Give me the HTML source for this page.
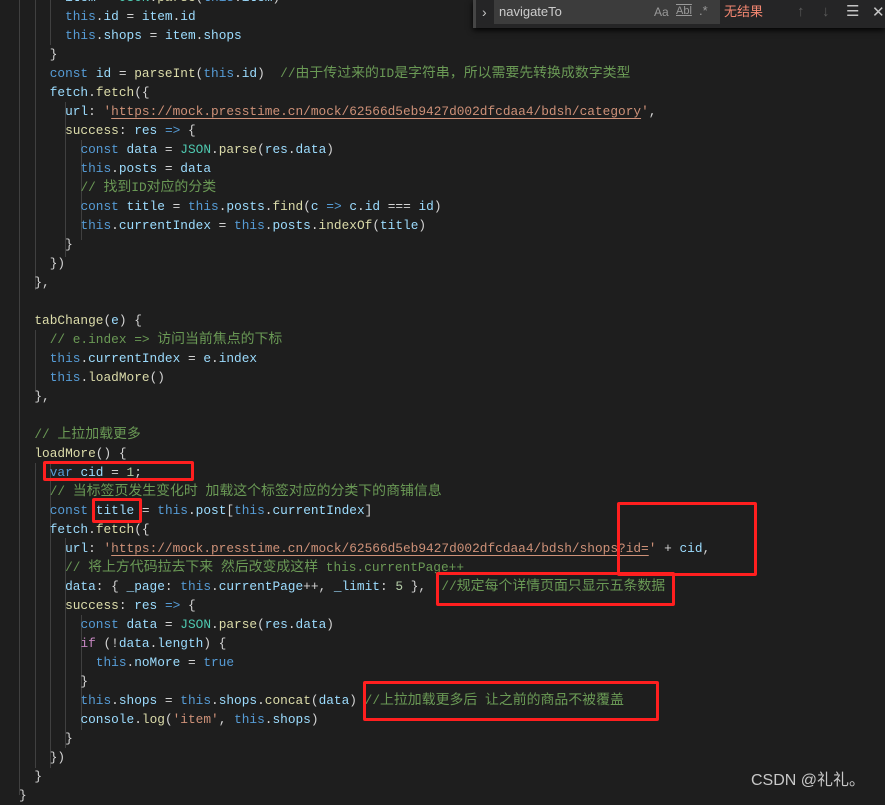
<!DOCTYPE html>
<html><head><meta charset="utf-8"><style>
body{margin:0;width:885px;height:795px;background:#1e1e1e;overflow:hidden;position:relative;font-family:"Liberation Mono","Noto Sans CJK SC",monospace;}
#code{position:absolute;left:19px;top:-12.5px;font-size:12.8px;line-height:19px;white-space:pre;color:#d4d4d4;}
.k{color:#569cd6}.v{color:#9cdcfe}.f{color:#dcdcaa}.s{color:#ce9178}.c{color:#6a9955}.t{color:#4ec9b0}.p{color:#c586c0}.n{color:#b5cea8}
.z{font-size:13.9px;line-height:0;font-family:"Noto Sans CJK SC",sans-serif}
.u{text-decoration:underline;text-decoration-color:#ce9178;text-underline-offset:3px}
.g{position:absolute;width:1px;background:#404040}
.box{position:absolute;border:3px solid #ff1f1f;border-radius:2px;box-sizing:border-box}
</style></head><body>
<div class="g" style="left:19px;top:0;height:795px"></div>
<div class="g" style="left:35px;top:0;height:290px"></div>
<div class="g" style="left:35px;top:330px;height:60px"></div>
<div class="g" style="left:35px;top:463px;height:305px"></div>
<div class="g" style="left:50px;top:0;height:45px"></div>
<div class="g" style="left:50px;top:463px;height:305px"></div>
<div class="g" style="left:65px;top:102px;height:155px"></div>
<div class="g" style="left:65px;top:538px;height:210px"></div>
<div class="g" style="left:81px;top:140px;height:100px"></div>
<div class="g" style="left:81px;top:615px;height:115px"></div>
<div class="g" style="left:81px;top:652px;height:20px"></div>
<div id="code">      <span class="v">item</span> = <span class="t">JSON</span>.<span class="f">parse</span>(<span class="k">this</span>.<span class="v">item</span>)
      <span class="k">this</span>.<span class="v">id</span> = <span class="v">item</span>.<span class="v">id</span>
      <span class="k">this</span>.<span class="v">shops</span> = <span class="v">item</span>.<span class="v">shops</span>
    }
    <span class="k">const</span> <span class="v">id</span> = <span class="f">parseInt</span>(<span class="k">this</span>.<span class="v">id</span>)  <span class="c">//<span class="z">由于传过来的</span>ID<span class="z">是字符串，所以需要先转换成数字类型</span></span>
    <span class="v">fetch</span>.<span class="f">fetch</span>({
      <span class="v">url</span>: <span class="s">'<span class="u">https://mock.presstime.cn/mock/62566d5eb9427d002dfcdaa4/bdsh/category</span>'</span>,
      <span class="f">success</span>: <span class="v">res</span> <span class="k">=&gt;</span> {
        <span class="k">const</span> <span class="v">data</span> = <span class="t">JSON</span>.<span class="f">parse</span>(<span class="v">res</span>.<span class="v">data</span>)
        <span class="k">this</span>.<span class="v">posts</span> = <span class="v">data</span>
        <span class="c">// <span class="z">找到</span>ID<span class="z">对应的分类</span></span>
        <span class="k">const</span> <span class="v">title</span> = <span class="k">this</span>.<span class="v">posts</span>.<span class="f">find</span>(<span class="v">c</span> <span class="k">=&gt;</span> <span class="v">c</span>.<span class="v">id</span> === <span class="v">id</span>)
        <span class="k">this</span>.<span class="v">currentIndex</span> = <span class="k">this</span>.<span class="v">posts</span>.<span class="f">indexOf</span>(<span class="v">title</span>)
      }
    })
  },

  <span class="f">tabChange</span>(<span class="v">e</span>) {
    <span class="c">// e.index =&gt; <span class="z">访问当前焦点的下标</span></span>
    <span class="k">this</span>.<span class="v">currentIndex</span> = <span class="v">e</span>.<span class="v">index</span>
    <span class="k">this</span>.<span class="f">loadMore</span>()
  },

  <span class="c">// <span class="z">上拉加载更多</span></span>
  <span class="f">loadMore</span>() {
    <span class="k">var</span> <span class="v">cid</span> = <span class="n">1</span>;
    <span class="c">// <span class="z">当标签页发生变化时</span> <span class="z">加载这个标签对应的分类下的商铺信息</span></span>
    <span class="k">const</span> <span class="v">title</span> = <span class="k">this</span>.<span class="v">post</span>[<span class="k">this</span>.<span class="v">currentIndex</span>]
    <span class="v">fetch</span>.<span class="f">fetch</span>({
      <span class="v">url</span>: <span class="s">'<span class="u">https://mock.presstime.cn/mock/62566d5eb9427d002dfcdaa4/bdsh/shops?id=</span>'</span> + <span class="v">cid</span>,
      <span class="c">// <span class="z">将上方代码拉去下来</span> <span class="z">然后改变成这样</span> this.currentPage++</span>
      <span class="v">data</span>: { <span class="v">_page</span>: <span class="k">this</span>.<span class="v">currentPage</span>++, <span class="v">_limit</span>: <span class="n">5</span> },  <span class="c">//<span class="z">规定每个详情页面只显示五条数据</span></span>
      <span class="f">success</span>: <span class="v">res</span> <span class="k">=&gt;</span> {
        <span class="k">const</span> <span class="v">data</span> = <span class="t">JSON</span>.<span class="f">parse</span>(<span class="v">res</span>.<span class="v">data</span>)
        <span class="p">if</span> (!<span class="v">data</span>.<span class="v">length</span>) {
          <span class="k">this</span>.<span class="v">noMore</span> = <span class="k">true</span>
        }
        <span class="k">this</span>.<span class="v">shops</span> = <span class="k">this</span>.<span class="v">shops</span>.<span class="f">concat</span>(<span class="v">data</span>) <span class="c">//<span class="z">上拉加载更多后</span> <span class="z">让之前的商品不被覆盖</span></span>
        <span class="v">console</span>.<span class="f">log</span>(<span class="s">'item'</span>, <span class="k">this</span>.<span class="v">shops</span>)
      }
    })
  }
}</div>
<div class="box" style="left:43px;top:461px;width:151px;height:20px"></div>
<div class="box" style="left:92px;top:498px;width:50px;height:25px"></div>
<div class="box" style="left:617px;top:502px;width:140px;height:74px"></div>
<div class="box" style="left:436px;top:572px;width:239px;height:34px"></div>
<div class="box" style="left:363px;top:681px;width:296px;height:40px"></div>
<div style="position:absolute;left:473px;top:0;width:412px;height:28px;background:#252526;box-shadow:0 2px 6px #000;font-family:'Liberation Sans','Noto Sans CJK SC',sans-serif;">
  <div style="position:absolute;left:0;top:0;width:3px;height:28px;background:#454545"></div>
  <div style="position:absolute;left:9px;top:4px;color:#c5c5c5;font-size:14px">&#x203A;</div>
  <div style="position:absolute;left:21px;top:0;width:226px;height:24px;background:#3c3c3c"></div>
  <div style="position:absolute;left:26px;top:4px;color:#ccc;font-size:13px">navigateTo</div>
  <div style="position:absolute;left:181px;top:5px;color:#999;font-size:12px">Aa</div>
  <div style="position:absolute;left:203px;top:5px;color:#999;font-size:11px;text-decoration:underline overline">Abl</div>
  <div style="position:absolute;left:226px;top:3px;color:#999;font-size:13px">.*</div>
  <div style="position:absolute;left:251px;top:3px;color:#f48771;font-size:13px;line-height:18px">无结果</div>
  <div style="position:absolute;left:324px;top:3px;color:#5a5a5a;font-size:15px">↑</div>
  <div style="position:absolute;left:349px;top:3px;color:#5a5a5a;font-size:15px">↓</div>
  <div style="position:absolute;left:373px;top:2px;color:#c5c5c5;font-size:15px">☰</div>
  <div style="position:absolute;left:399px;top:3px;color:#c5c5c5;font-size:15px">✕</div>
</div>
<div style="position:absolute;left:751px;top:766px;color:#c8c8c8;font-size:16px;font-family:'Liberation Sans','Noto Sans CJK SC',sans-serif">CSDN @礼礼。</div>
</body></html>
